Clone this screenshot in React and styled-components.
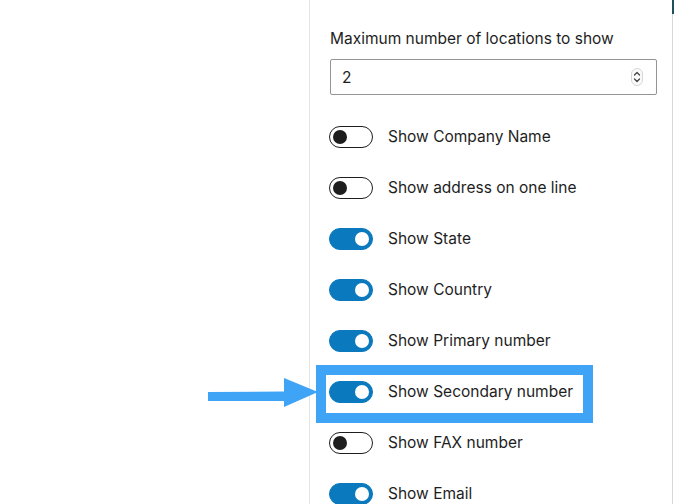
import React from "react";
import styled, { createGlobalStyle } from "styled-components";

const GlobalStyle = createGlobalStyle`
  html, body {
    margin: 0;
    padding: 0;
    background: #ffffff;
  }
  body {
    font-family: Inter, "Liberation Sans", Arial, sans-serif;
    color: #1e1e1e;
  }
`;

const options = [
  { label: "Show Company Name", on: false },
  { label: "Show address on one line", on: false },
  { label: "Show State", on: true },
  { label: "Show Country", on: true },
  { label: "Show Primary number", on: true },
  { label: "Show Secondary number", on: true, highlight: true },
  { label: "Show FAX number", on: false },
  { label: "Show Email", on: true },
];

const Spinner = () => (
  <svg width="12" height="18" viewBox="0 0 12 18">
    <rect x="0.5" y="0.5" width="11" height="17" rx="5.5" fill="#fafafa" stroke="#d6d6d6" />
    <path d="M3.5 7 L6 4.5 L8.5 7" fill="none" stroke="#444" strokeWidth="1.3" strokeLinecap="round" strokeLinejoin="round" />
    <path d="M3.5 11 L6 13.5 L8.5 11" fill="none" stroke="#444" strokeWidth="1.3" strokeLinecap="round" strokeLinejoin="round" />
  </svg>
);

const Arrow = () => (
  <ArrowWrap>
    <svg width="112" height="30" viewBox="0 0 112 30">
      <polygon points="0,14 76,13.5 76,0 110,14 76,29 76,23 0,23" fill="#3fa3f6" />
    </svg>
  </ArrowWrap>
);

export default function App() {
  return (
    <Page>
      <GlobalStyle />
      <Blank />
      <Sidebar>
        <Label>Maximum number of locations to show</Label>
        <NumberField>
          <span>2</span>
          <Spinner />
        </NumberField>
        <ToggleList>
          {options.map((o) => (
            <Row key={o.label} $highlight={o.highlight}>
              {o.highlight && <Arrow />}
              <Toggle $on={o.on}>
                <Thumb $on={o.on} />
              </Toggle>
              <RowLabel>{o.label}</RowLabel>
            </Row>
          ))}
        </ToggleList>
      </Sidebar>
    </Page>
  );
}

const Page = styled.div`
  display: flex;
  width: 677px;
  height: 504px;
  overflow: hidden;
`;

const Blank = styled.div`
  width: 309px;
  flex-shrink: 0;
`;

const Sidebar = styled.div`
  position: relative;
  box-sizing: border-box;
  width: 364px;
  flex-shrink: 0;
  border-left: 1px solid #e4e4e4;
  border-right: 1px solid #d8d8d8;
  padding: 29px 15px 0 20px;

  &::after {
    content: "";
    position: absolute;
    top: 0;
    right: -2px;
    width: 2px;
    height: 14px;
    background: #1f4f5a;
  }
`;

const Label = styled.div`
  font-size: 15.5px;
  line-height: 20px;
  color: #1e1e1e;
`;

const NumberField = styled.div`
  margin-top: 10px;
  height: 36px;
  box-sizing: border-box;
  border: 1px solid #949494;
  border-radius: 2px;
  display: flex;
  align-items: center;
  justify-content: space-between;
  padding: 0 13px 0 11px;
  font-size: 15.5px;
`;

const ToggleList = styled.div`
  margin-top: 31px;
  display: flex;
  flex-direction: column;
  align-items: flex-start;
  gap: 29px;
`;

const Row = styled.div`
  position: relative;
  display: flex;
  align-items: center;
  gap: 15px;
  height: 22px;
  margin-left: -1px;
  width: ${({ $highlight }) => ($highlight ? "254px" : "auto")};

  &::before {
    content: "";
    display: ${({ $highlight }) => ($highlight ? "block" : "none")};
    position: absolute;
    top: -16px;
    bottom: -20px;
    left: -13px;
    right: -10px;
    border: 10px solid #3fa3f6;
    pointer-events: none;
  }
`;

const ArrowWrap = styled.div`
  position: absolute;
  left: -121px;
  top: -3px;
  line-height: 0;
`;

const Toggle = styled.div`
  position: relative;
  width: 44px;
  height: 22px;
  box-sizing: border-box;
  border-radius: 11px;
  flex-shrink: 0;
  background: ${({ $on }) => ($on ? "#0a79bd" : "#ffffff")};
  border: 1.5px solid ${({ $on }) => ($on ? "#0a79bd" : "#1e1e1e")};
`;

const Thumb = styled.span`
  position: absolute;
  top: 2.5px;
  left: ${({ $on }) => ($on ? "25px" : "3px")};
  width: 14px;
  height: 14px;
  border-radius: 50%;
  background: ${({ $on }) => ($on ? "#ffffff" : "#1e1e1e")};
`;

const RowLabel = styled.span`
  font-size: 15.5px;
  line-height: 20px;
  color: #1e1e1e;
  white-space: nowrap;
`;
